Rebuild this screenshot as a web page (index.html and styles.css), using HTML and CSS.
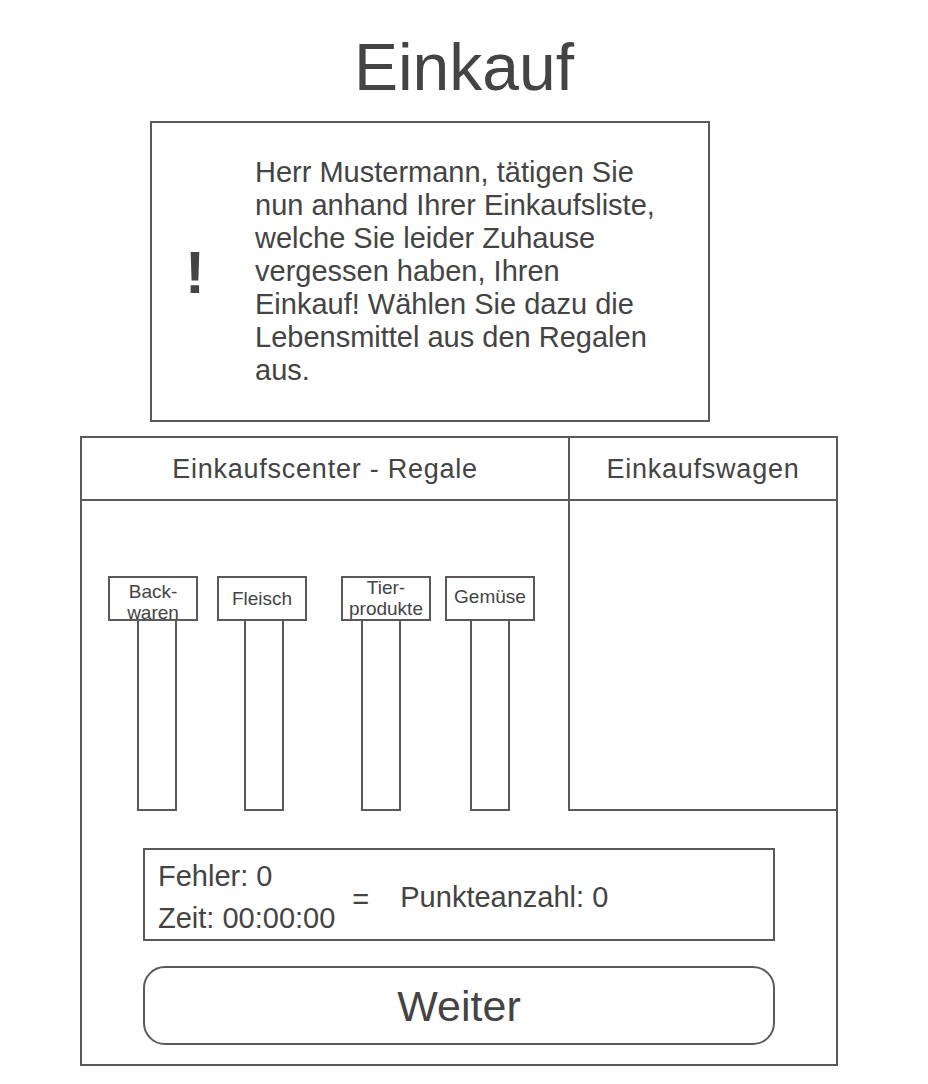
FILE: index.html
```html
<!DOCTYPE html>
<html lang="de">
<head>
    <meta charset="UTF-8">
    <meta name="viewport" content="width=device-width, initial-scale=1.0">
    <title>Einkauf</title>
    <link rel="stylesheet" href="styles.css">
</head>
<body>
    <h1 class="title">Einkauf</h1>

    <div class="notice">
        <div class="notice-mark">!</div>
        <p class="notice-text">Herr Mustermann, tätigen Sie nun anhand Ihrer Einkaufsliste, welche Sie leider Zuhause vergessen haben, Ihren Einkauf! Wählen Sie dazu die Lebensmittel aus den Regalen aus.</p>
    </div>

    <div class="shop">
        <div class="shop-top">
            <div class="shelves-col">
                <div class="col-head">Einkaufscenter - Regale</div>
                <div class="shelves">
                    <div class="shelf shelf-1">
                        <div class="shelf-label label-low">Back-<br>waren</div>
                        <div class="shelf-post"></div>
                    </div>
                    <div class="shelf shelf-2">
                        <div class="shelf-label">Fleisch</div>
                        <div class="shelf-post"></div>
                    </div>
                    <div class="shelf shelf-3">
                        <div class="shelf-label label-high">Tier-<br>produkte</div>
                        <div class="shelf-post"></div>
                    </div>
                    <div class="shelf shelf-4">
                        <div class="shelf-label label-up">Gemüse</div>
                        <div class="shelf-post"></div>
                    </div>
                </div>
            </div>
            <div class="cart-col">
                <div class="col-head">Einkaufswagen</div>
                <div class="cart"></div>
            </div>
        </div>

        <div class="shop-bottom">
            <div class="score">
                <div class="score-left">
                    <div>Fehler: 0</div>
                    <div>Zeit: 00:00:00</div>
                </div>
                <div class="score-eq">=</div>
                <div class="score-total">Punkteanzahl: 0</div>
            </div>
            <button class="next-btn">Weiter</button>
        </div>
    </div>
</body>
</html>
```

FILE: styles.css
```css
* {
    box-sizing: border-box;
}
body {
    margin: 0;
    width: 928px;
    font-family: "Liberation Sans", Arial, sans-serif;
    color: #444;
    background-color: #fff;
}
.title {
    margin: 29px 0 16px;
    font-size: 66px;
    line-height: 76px;
    font-weight: normal;
    text-align: center;
}

/* hinweis box */
.notice {
    display: flex;
    align-items: center;
    width: 560px;
    height: 301px;
    margin-left: 150px;
    border: 2px solid #5a5a5a;
}
.notice-mark {
    width: 103px;
    padding-right: 17px;
    text-align: center;
    font-size: 60px;
    font-weight: bold;
    margin-top: 2px;
}
.notice-text {
    width: 408px;
    margin: 0;
    font-size: 29px;
    line-height: 33px;
}

/* einkaufscenter */
.shop {
    width: 758px;
    height: 630px;
    margin: 14px 0 0 80px;
    border: 2px solid #5a5a5a;
}
.shop-top {
    display: grid;
    grid-template-columns: 486px 1fr;
}
.col-head {
    height: 63px;
    border-bottom: 2px solid #5a5a5a;
    font-size: 27px;
    letter-spacing: 0.75px;
    line-height: 62px;
    text-align: center;
}
.cart-col {
    border-left: 2px solid #5a5a5a;
    border-bottom: 2px solid #5a5a5a;
}
.cart {
    height: 308px;
}
.shelves {
    display: flex;
    align-items: flex-end;
    height: 310px;
    padding-left: 26px;
}
.shelf {
    display: flex;
    flex-direction: column;
    align-items: center;
    width: 90px;
}
.shelf-2 {
    margin-left: 19px;
}
.shelf-3 {
    margin-left: 34px;
}
.shelf-4 {
    margin-left: 14px;
}
.shelf-label {
    width: 90px;
    height: 45px;
    border: 2px solid #5a5a5a;
    font-size: 19px;
    line-height: 21px;
    text-align: center;
    display: flex;
    align-items: center;
    justify-content: center;
}
.label-low {
    padding-top: 6px;
}
.label-high {
    padding-bottom: 2px;
}
.label-up {
    padding-bottom: 5px;
}
.shelf-post {
    width: 40px;
    height: 191px;
    margin-top: -1px;
    border: 2px solid #5a5a5a;
    border-top: none;
}
.shelf-1 .shelf-post {
    margin-left: 7px;
}
.shelf-2 .shelf-post {
    margin-left: 3px;
}
.shelf-3 .shelf-post {
    margin-left: -11px;
}

/* punkte + weiter */
.shop-bottom {
    display: flex;
    flex-direction: column;
    align-items: center;
    padding-top: 37px;
}
.score {
    display: flex;
    align-items: center;
    width: 632px;
    height: 93px;
    padding: 5px 0 0 13px;
    border: 2px solid #5a5a5a;
    font-size: 29px;
}
.score-left {
    line-height: 42px;
}
.score-eq {
    margin-left: 17px;
    padding-top: 5px;
}
.score-total {
    margin-left: 31px;
}
.next-btn {
    width: 632px;
    height: 79px;
    margin-top: 25px;
    padding-top: 3px;
    border: 2px solid #5a5a5a;
    border-radius: 22px;
    background-color: #fff;
    font-family: "Liberation Sans", Arial, sans-serif;
    font-size: 43px;
    color: #444;
    cursor: pointer;
}
```
